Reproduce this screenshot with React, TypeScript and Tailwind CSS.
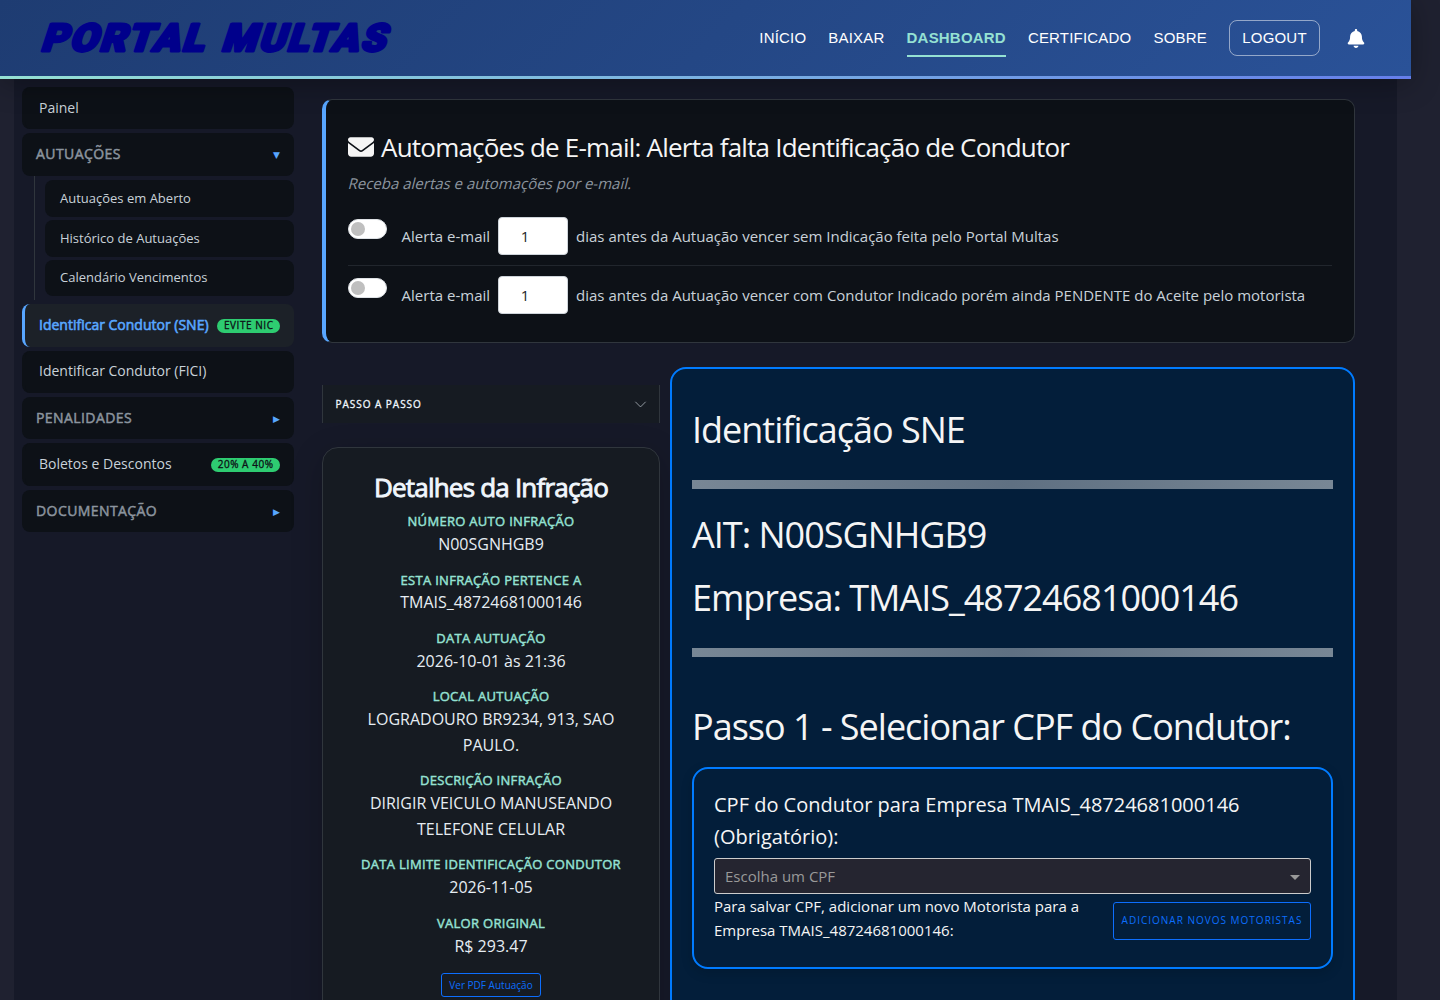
import { useState } from 'react';
import clsx from 'clsx';
import { FaBell, FaEnvelope } from 'react-icons/fa6';

type MenuItem = {
  label: string;
  kind: 'link' | 'group';
  badge?: string;
  active?: boolean;
  children?: string[];
};

const navLinks = ['INÍCIO', 'BAIXAR', 'DASHBOARD', 'CERTIFICADO', 'SOBRE'];

const menu: MenuItem[] = [
  { label: 'Painel', kind: 'link' },
  {
    label: 'AUTUAÇÕES',
    kind: 'group',
    children: ['Autuações em Aberto', 'Histórico de Autuações', 'Calendário Vencimentos'],
  },
  { label: 'Identificar Condutor (SNE)', kind: 'link', badge: 'EVITE NIC', active: true },
  { label: 'Identificar Condutor (FICI)', kind: 'link' },
  { label: 'PENALIDADES', kind: 'group' },
  { label: 'Boletos e Descontos', kind: 'link', badge: '20% A 40%' },
  { label: 'DOCUMENTAÇÃO', kind: 'group' },
];

const alerts = [
  'dias antes da Autuação vencer sem Indicação feita pelo Portal Multas',
  'dias antes da Autuação vencer com Condutor Indicado porém ainda PENDENTE do Aceite pelo motorista',
];

const details = [
  ['NÚMERO AUTO INFRAÇÃO', 'N00SGNHGB9'],
  ['ESTA INFRAÇÃO PERTENCE A', 'TMAIS_48724681000146'],
  ['DATA AUTUAÇÃO', '2026-10-01 às 21:36'],
  ['LOCAL AUTUAÇÃO', 'LOGRADOURO BR9234, 913, SAO PAULO.'],
  ['DESCRIÇÃO INFRAÇÃO', 'DIRIGIR VEICULO MANUSEANDO TELEFONE CELULAR'],
  ['DATA LIMITE IDENTIFICAÇÃO CONDUTOR', '2026-11-05'],
  ['VALOR ORIGINAL', 'R$ 293.47'],
];

function Logo() {
  return (
    <svg width="380" height="76" viewBox="0 0 380 76" className="ml-6 shrink-0">
      <g
        fill="#00008b"
        stroke="#00008b"
        strokeWidth="3"
        strokeLinejoin="round"
        fontFamily="Roboto, 'Liberation Sans', sans-serif"
        fontWeight="900"
        fontSize="38"
        letterSpacing="2"
        transform="translate(0 51.2) skewX(-18)"
      >
        <text x="16" y="0" textLength="165" lengthAdjust="spacingAndGlyphs">PORTAL</text>
        <text x="196.5" y="0" textLength="166" lengthAdjust="spacingAndGlyphs">MULTAS</text>
      </g>
    </svg>
  );
}

function Header() {
  return (
    <header className="relative z-10 w-[1411px] shadow-[0_4px_30px_rgba(0,0,0,0.3)]">
      <div className="flex h-[76px] items-center justify-between bg-linear-135 from-[#1e3c72] to-[#2a5298]">
        <Logo />
        <nav className="mr-[46px] flex items-center gap-[22px] font-['Liberation_Sans',Arial,sans-serif] text-[15px] tracking-[0.2px] text-white">
          {navLinks.map((link) => (
            <a
              key={link}
              href="#"
              className={clsx(
                'flex h-[38px] items-center border-b-2 pt-[2px]',
                link === 'DASHBOARD' ? 'border-[#95e1d3] font-bold text-[#95e1d3]' : 'border-transparent',
              )}
            >
              {link}
            </a>
          ))}
          <button className="h-9 w-[91px] rounded-lg border border-white/50 tracking-[0.2px]">LOGOUT</button>
          <FaBell className="ml-[5px] mt-px h-[19px] w-[18px]" />
        </nav>
      </div>
      <div className="h-[3px] bg-linear-to-r from-[#95e1d3] to-[#667eea]" />
    </header>
  );
}

function Sidebar() {
  const [open, setOpen] = useState<string | null>('AUTUAÇÕES');

  return (
    <aside className="w-[272px] shrink-0 pt-[7.8px]">
      {menu.map((item) => (
        <div key={item.label} className="mb-1">
          {item.kind === 'link' ? (
            <a
              href="#"
              className={clsx(
                'flex h-[42.4px] items-center justify-between rounded-lg border-l-[3px] px-[14px] pb-[1.5px] text-[14px]',
                item.active
                  ? 'border-[#58a6ff] bg-[#1c2128] text-[#58a6ff] [-webkit-text-stroke:0.6px_currentColor]'
                  : 'border-[#0d1117] bg-[#0d1117] text-[#c9d1d9]',
              )}
            >
              {item.label}
              {item.badge && (
                <span className="mt-[1.8px] flex h-[14px] items-center rounded-full bg-[#2ecc71] px-[6.5px] text-[10px] tracking-[0.55px] text-[#0d1117] [-webkit-text-stroke:0.3px_currentColor]">
                  {item.badge}
                </span>
              )}
            </a>
          ) : (
            <button
              onClick={() => setOpen(open === item.label ? null : item.label)}
              className="flex h-[42.4px] w-full items-center justify-between rounded-lg bg-[#0d1117] px-[14px] pb-[1.4px] text-[14px] tracking-[0.42px] text-[#8b949e]"
            >
              <span className="[-webkit-text-stroke:0.5px_currentColor]">{item.label}</span>
              <span className="pt-[4.2px] font-['DejaVu_Sans',sans-serif] text-[9px] tracking-normal text-[#58a6ff]">
                {open === item.label ? '▼' : '▶'}
              </span>
            </button>
          )}
          {item.children && open === item.label && (
            <div className="ml-3 flex flex-col gap-[3px] border-l border-[#30363d] pt-[4.8px] pb-[4px] pl-[10px]">
              {item.children.map((child) => (
                <a
                  key={child}
                  href="#"
                  className="flex h-[36.6px] items-center rounded-lg bg-[#0d1117] pl-[15px] text-[13px] text-[#c9d1d9]"
                >
                  {child}
                </a>
              ))}
            </div>
          )}
        </div>
      ))}
    </aside>
  );
}

function EmailAlerts() {
  return (
    <section className="h-[244px] rounded-[10px] border border-l-4 border-[#30363d] border-l-[#58a6ff] bg-[#0d1117] px-[22px] pt-[31px] text-[15px] text-[#c9d1d9]">
      <h2 className="flex h-8 items-center gap-[7px] text-[26px] tracking-[-0.79px] text-[#f5f5f5]">
        <FaEnvelope className="size-[26px]" />
        Automações de E-mail: Alerta falta Identificação de Condutor
      </h2>
      <p className="mt-2 ml-px h-6 w-fit -skew-x-[14deg] leading-6 text-[#8b949e]">
        Receba alertas e automações por e-mail.
      </p>
      {alerts.map((text, i) => (
        <div
          key={text}
          className={clsx('flex', i === 0 ? 'mt-[22px] h-[49px] border-b border-[#21262d]' : 'pt-[10px]')}
        >
          <span className="mt-[2px] flex h-5 w-[39px] items-center rounded-full border border-[#dee2e6] bg-white pl-[2px]">
            <span className="size-[14px] rounded-full bg-[#bfbfbf]" />
          </span>
          <label className="ml-[14.6px] flex h-[38px] items-center gap-2">
            Alerta e-mail
            <input
              readOnly
              value={1}
              className="h-[38px] w-[70px] rounded-sm border border-[#ced4da] bg-white pr-4 text-center text-[#212529]"
            />
            {text}
          </label>
        </div>
      ))}
    </section>
  );
}

function InfractionDetails() {
  return (
    <div className="w-[338px] shrink-0">
      <button className="mt-[18px] flex h-[38px] w-full items-center justify-between border-x border-[#30363d] bg-[#161b22] pr-[12.5px] pl-[12.5px] text-[10px] tracking-[0.97px] text-[#f0f6fc]">
        <span className="[-webkit-text-stroke:0.3px_currentColor]">PASSO A PASSO</span>
        <svg width="13" height="13" viewBox="0 0 16 16" fill="none" stroke="#adb5bd">
          <path d="M2 5l6 6 6-6" strokeLinecap="round" strokeLinejoin="round" />
        </svg>
      </button>
      <section className="mt-6 h-[600px] rounded-2xl border border-[#30363d] bg-[#161b22] px-6 pt-[23.2px] text-center shadow-[0_8px_32px_rgba(0,0,0,0.2)]">
        <h2 className="h-[40px] text-[26px] leading-[32px] tracking-[-0.8px] text-[#f0f6fc] [-webkit-text-stroke:0.9px_currentColor]">
          Detalhes da Infração
        </h2>
        {details.map(([label, value]) => (
          <div key={label} className="mb-3">
            <p className="text-[13px] leading-[20.8px] tracking-[0.3px] whitespace-nowrap text-[#95e1d3] [-webkit-text-stroke:0.45px_currentColor]">
              {label}
            </p>
            <p className="text-[16px] leading-[25.6px] text-[#e6edf3]">{value}</p>
          </div>
        ))}
        <button className="mx-auto mt-[14px] block h-6 w-[100px] rounded-[3px] border border-[#0d6efd] text-[10px] text-[#0d6efd]">
          Ver PDF Autuação
        </button>
      </section>
    </div>
  );
}

function Rule() {
  return <hr className="h-[9px] border-0 bg-linear-to-r from-[#788795] via-[#5f7082] to-[#788795]" />;
}

function DriverForm() {
  return (
    <section className="h-[700px] grow rounded-2xl border-2 border-[#007bff] bg-[#031e3a] px-5 pt-[38px] text-[#f5f5f5]">
      <h1 className="mb-[27px] text-[36px] leading-[46px] tracking-[-1px]">Identificação SNE</h1>
      <Rule />
      <div className="mt-[23px] mb-[27px] text-[36px] leading-[46px] tracking-[-1px]">
        <p className="mb-[17px]">AIT: N00SGNHGB9</p>
        <p>Empresa: TMAIS_48724681000146</p>
      </div>
      <Rule />
      <h1 className="mt-[47px] text-[36px] leading-[46px] tracking-[-1px]">Passo 1 - Selecionar CPF do Condutor:</h1>
      <div className="mt-[17px] h-[202px] rounded-2xl border-2 border-[#007bff] px-5 pt-5 shadow-[0_4px_12px_rgba(0,0,0,0.15)]">
        <label className="block text-[20px] leading-8">
          CPF do Condutor para Empresa TMAIS_48724681000146 (Obrigatório):
        </label>
        <div className="mt-[5px] flex h-9 items-center justify-between rounded-[3px] border border-[#ccc] bg-[#252530] px-[10px] text-[15px] text-[#999]">
          Escolha um CPF
          <span className="mt-[2px] border-x-5 border-t-5 border-x-transparent border-t-[#999]" />
        </div>
        <div className="flex justify-between">
          <p className="w-[380px] text-[15px] leading-6">
            Para salvar CPF, adicionar um novo Motorista para a Empresa TMAIS_48724681000146:
          </p>
          <button className="mt-2 h-[38px] w-[198px] rounded-[3px] border border-[#0d6efd] pb-[2px] text-[10px] tracking-[1px] whitespace-nowrap text-[#0d6efd]">
            ADICIONAR NOVOS MOTORISTAS
          </button>
        </div>
      </div>
    </section>
  );
}

export default function App() {
  return (
    <div className="h-[1000px] w-[1440px] overflow-hidden bg-[#1f2130] font-['Open_Sans','Noto_Sans',sans-serif]">
      <Header />
      <div className="mx-[14px] flex h-[921px] w-[1383px] bg-[#161928] pl-2">
        <Sidebar />
        <main className="ml-7 w-[1033px] pt-5">
          <EmailAlerts />
          <div className="mt-6 flex gap-[10px]">
            <InfractionDetails />
            <DriverForm />
          </div>
        </main>
      </div>
    </div>
  );
}
